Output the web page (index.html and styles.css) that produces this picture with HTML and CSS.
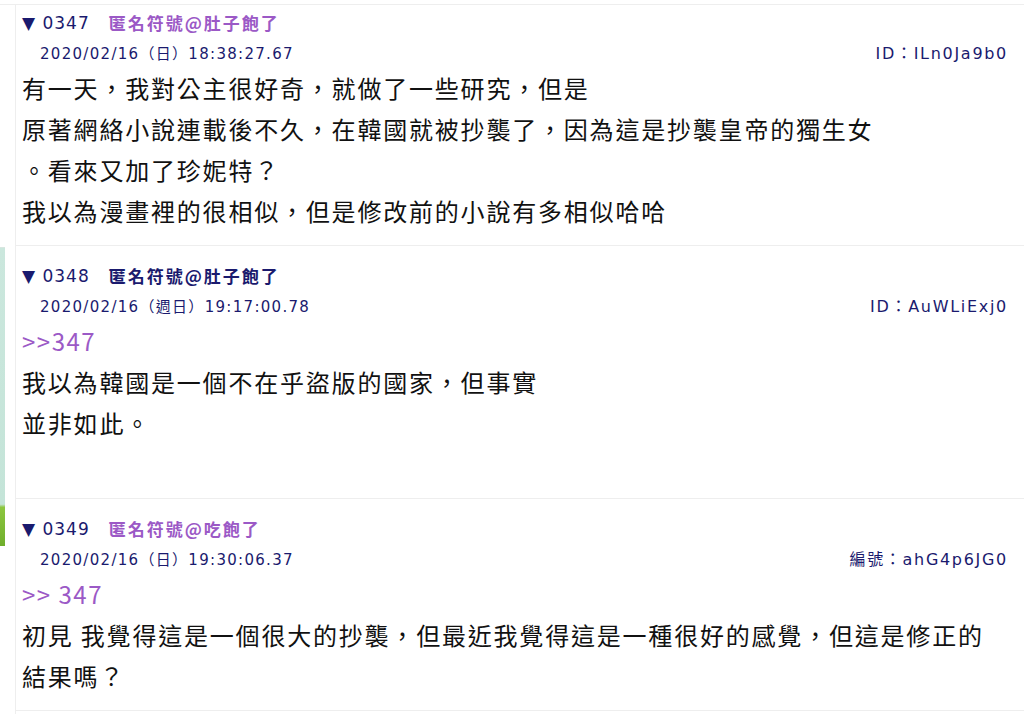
FILE: index.html
```html
<!DOCTYPE html>
<html lang="zh-Hant">
<head>
  <meta charset="UTF-8">
  <meta name="viewport" content="width=device-width, initial-scale=1.0">
  <title>討論串</title>
  <link rel="stylesheet" href="styles.css">
</head>
<body>
  <div class="page">
    <div class="sidebar">
      <div class="sidebar-img"></div>
    </div>
    <div class="thread">
      <div class="post first">
        <div class="post-head">
          <span class="post-no">▼ 0347</span>
          <span class="post-name">匿名符號@肚子飽了</span>
        </div>
        <div class="post-meta">
          <span class="post-date">2020/02/16（日）18:38:27.67</span>
          <span class="post-id">ID：ILn0Ja9b0</span>
        </div>
        <div class="post-body">
          有一天，我對公主很好奇，就做了一些研究，但是<br>
          原著網絡小說連載後不久，在韓國就被抄襲了，因為這是抄襲皇帝的獨生女<br>
          。看來又加了珍妮特？<br>
          我以為漫畫裡的很相似，但是修改前的小說有多相似哈哈
        </div>
      </div>

      <div class="post">
        <div class="post-head">
          <span class="post-no">▼ 0348</span>
          <span class="post-name dark">匿名符號@肚子飽了</span>
        </div>
        <div class="post-meta">
          <span class="post-date">2020/02/16（週日）19:17:00.78</span>
          <span class="post-id">ID：AuWLiExj0</span>
        </div>
        <div class="post-body">
          <span class="quote">&gt;&gt;347</span><br>
          我以為韓國是一個不在乎盜版的國家，但事實<br>
          並非如此。<br>
          &nbsp;
        </div>
      </div>

      <div class="post">
        <div class="post-head">
          <span class="post-no">▼ 0349</span>
          <span class="post-name">匿名符號@吃飽了</span>
        </div>
        <div class="post-meta">
          <span class="post-date">2020/02/16（日）19:30:06.37</span>
          <span class="post-id">編號：ahG4p6JG0</span>
        </div>
        <div class="post-body">
          <span class="quote">&gt;&gt; 347</span><br>
          初見 我覺得這是一個很大的抄襲，但最近我覺得這是一種很好的感覺，但這是修正的<br>
          結果嗎？
        </div>
      </div>
    </div>
  </div>
</body>
</html>
```

FILE: styles.css
```css
body {
  margin: 0;
  background-color: #fff;
  font-family: "DejaVu Sans", "Noto Sans CJK TC", sans-serif;
  overflow: hidden;
}

.page {
  display: flex;
  margin-top: 4px;
  border-top: 1px solid #eee;
  min-height: 714px;
}

.sidebar {
  width: 15px;
  flex-shrink: 0;
}

.sidebar-img {
  width: 5px;
  height: 298px;
  margin-top: 242px;
  border-top: 1px solid #d8e6e0;
  background: linear-gradient(#cbe7dd 0, #c4e4d8 86%, #8cc63f 87%, #6fae2c 100%);
}

.thread {
  flex: 1;
  border-left: 1px solid #eee;
}

.post {
  padding: 18px 16px 14px 6px;
  border-bottom: 1px solid #eee;
}

.post.first {
  padding-top: 6px;
}

.post-head {
  display: flex;
  gap: 19px;
  font-size: 17px;
  line-height: 24px;
  color: #1a1a6e;
}

.post-no {
  letter-spacing: 1px;
}

.post-name {
  font-family: "Noto Sans CJK TC", sans-serif;
  font-weight: bold;
  letter-spacing: 2px;
  color: #9b59c6;
}

.post-name.dark {
  color: #1a1a6e;
}

.post-meta {
  display: flex;
  justify-content: space-between;
  padding-left: 18px;
  margin-top: 9px;
  font-size: 15px;
  line-height: 20px;
  color: #1a1a6e;
  letter-spacing: 1.3px;
}

.post-id {
  font-size: 16px;
  letter-spacing: 1.7px;
}

.post-body {
  margin-top: 3px;
  font-family: "Noto Sans CJK TC", sans-serif;
  font-size: 24px;
  line-height: 41px;
  letter-spacing: 1.8px;
  color: #111;
}

.quote {
  color: #9b59c6;
  letter-spacing: 1.5px;
}
```
